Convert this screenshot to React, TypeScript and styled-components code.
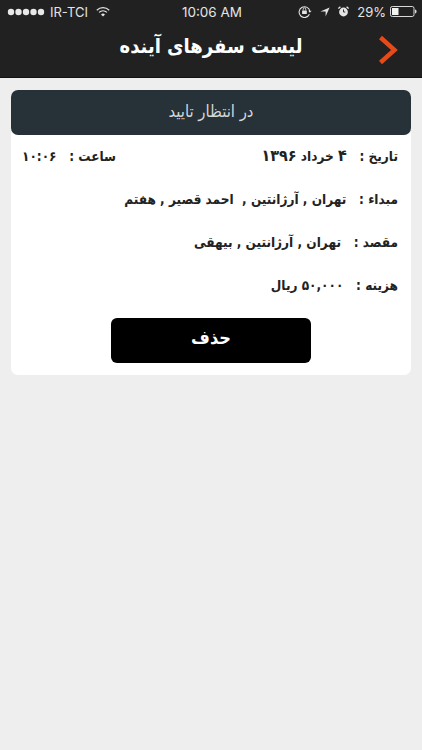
import React from "react";
import styled, { createGlobalStyle } from "styled-components";

const GlobalStyle = createGlobalStyle`
  html, body {
    margin: 0;
    padding: 0;
    background: #eeeeee;
  }
`;

const Page = styled.div`
  width: 422px;
  height: 750px;
  overflow: hidden;
  background: #eeeeee;
  font-family: "DejaVu Sans Condensed", "DejaVu Sans", sans-serif;
`;

const Header = styled.header`
  height: 78px;
  box-sizing: border-box;
  background: #212121;
  border-bottom: 1px solid #111;
  color: #fff;
`;

const StatusBar = styled.div`
  height: 23px;
  padding: 0 5px 0 7px;
  display: grid;
  grid-template-columns: 1fr auto 1fr;
  align-items: center;
  font-family: "Inter", "Liberation Sans", sans-serif;
  font-size: 13px;
  color: #e4e4e4;
`;

const StatusLeft = styled.div`
  display: flex;
  align-items: center;
  gap: 5px;
`;

const WifiSlot = styled.span`
  display: flex;
  margin-left: 3px;
`;

const StatusRight = styled.div`
  display: flex;
  align-items: center;
  justify-content: flex-end;
  gap: 8px;
`;

const BatteryLevel = styled.span`
  margin-right: -4px;
`;

const Clock = styled.div`
  font-size: 13.5px;
`;

const TitleRow = styled.div`
  height: 54px;
  display: grid;
  grid-template-columns: 44px 1fr 44px;
  align-items: center;
`;

const Title = styled.h1`
  grid-column: 2;
  margin: 0 0 9px;
  text-align: center;
  direction: rtl;
  font-size: 20px;
  font-weight: 700;
`;

const Content = styled.main`
  padding: 12px 11px 0;
`;

const Card = styled.section`
  background: #fff;
  border-radius: 7px;
  padding-bottom: 12px;
`;

const CardTitle = styled.div`
  height: 45px;
  background: #263238;
  border-radius: 7px;
  display: flex;
  align-items: center;
  justify-content: center;
  color: #d4d8da;
  direction: rtl;
  font-size: 16.5px;
  padding-bottom: 3px;
  box-sizing: border-box;
`;

const Rows = styled.div`
  direction: rtl;
  padding: 0 13px 0 11px;
`;

const Row = styled.div<{ $between?: boolean }>`
  height: 43px;
  display: flex;
  align-items: center;
  justify-content: ${({ $between }) => ($between ? "space-between" : "flex-start")};
  color: #222;
  font-size: 13.5px;
  font-weight: 700;
  white-space: pre;
  &:first-child {
    height: 42px;
  }
`;

const DateNumber = styled.span`
  font-size: 16px;
  line-height: 1;
`;

const ButtonRow = styled.div`
  display: flex;
  justify-content: center;
  margin-top: 12px;
`;

const DeleteButton = styled.button`
  width: 200px;
  height: 45px;
  border: 0;
  border-radius: 6px;
  background: #000;
  color: #fff;
  font-family: inherit;
  font-size: 18px;
  font-weight: 700;
  padding: 0 0 6px;
`;

const Signal = () => (
  <svg width="38" height="8" viewBox="0 0 38 8">
    {[4, 11.5, 19, 26.5, 34].map((cx) => (
      <circle key={cx} cx={cx} cy="4" r="3.2" fill="#e8e8e8" />
    ))}
  </svg>
);

const Wifi = () => (
  <svg width="14" height="10" viewBox="0 0 14 10" fill="none" stroke="#e4e4e4" strokeWidth="1.2">
    <path d="M.8 3.2a9 9 0 0 1 12.4 0" />
    <path d="M3 5.4a6 6 0 0 1 8 0" />
    <path d="M7 9.6 5 7.5a3 3 0 0 1 4 0Z" fill="#e4e4e4" stroke="none" />
  </svg>
);

const RotationLock = () => (
  <svg width="14" height="13" viewBox="0 0 13 12" fill="none">
    <path d="M10.6 8.6A5 5 0 1 1 11 6" stroke="#e4e4e4" strokeWidth="1" />
    <path d="M9.6 5.4h3L11 7.2Z" fill="#e4e4e4" />
    <rect x="3.8" y="5" width="4.4" height="3.4" rx=".5" fill="#e4e4e4" />
    <path d="M4.8 5V3.8a1.2 1.2 0 0 1 2.4 0V5" stroke="#e4e4e4" strokeWidth=".8" />
  </svg>
);

const Location = () => (
  <svg width="10" height="10" viewBox="0 0 10 10">
    <path d="M9.6.4 5.6 9.6V4.4H.4Z" fill="#e4e4e4" />
  </svg>
);

const Alarm = () => (
  <svg width="11" height="11" viewBox="0 0 11 11" fill="none">
    <circle cx="5.5" cy="6" r="4.4" fill="#e4e4e4" />
    <path d="M5.5 3.4V6h1.8" stroke="#212121" strokeWidth=".9" />
    <path d="M.4 2.6 2.4.7M10.6 2.6 8.6.7" stroke="#e4e4e4" strokeWidth="1.3" />
  </svg>
);

const Battery = () => (
  <svg width="27" height="11" viewBox="0 0 27 11" fill="none">
    <rect x=".5" y=".5" width="23.5" height="10" rx="1.8" stroke="#d8d8d8" />
    <rect x="2" y="2" width="6.5" height="7" fill="#f2f2f2" />
    <path d="M25 3.6c1 .2 1.6 1 1.6 1.9s-.6 1.7-1.6 1.9Z" fill="#d8d8d8" />
  </svg>
);

const Chevron = () => (
  <svg width="20" height="30" viewBox="0 0 20 30" fill="none">
    <path d="M2.5 2.5 16.5 15 2.5 27.5" stroke="#e64a19" strokeWidth="4.4" />
  </svg>
);

const App: React.FC = () => (
  <Page>
    <GlobalStyle />
    <Header>
      <StatusBar>
        <StatusLeft>
          <Signal />
          <span>IR-TCI</span>
          <WifiSlot>
            <Wifi />
          </WifiSlot>
        </StatusLeft>
        <Clock>10:06 AM</Clock>
        <StatusRight>
          <RotationLock />
          <Location />
          <Alarm />
          <BatteryLevel>29%</BatteryLevel>
          <Battery />
        </StatusRight>
      </StatusBar>
      <TitleRow>
        <Title>لیست سفرهای آینده</Title>
        <Chevron />
      </TitleRow>
    </Header>
    <Content>
      <Card>
        <CardTitle>در انتظار تایید</CardTitle>
        <Rows>
          <Row $between>
            <span>
              تاریخ :   <DateNumber>۴</DateNumber> خرداد <DateNumber>۱۳۹۶</DateNumber>
            </span>
            <span>ساعت :   ۱۰:۰۶</span>
          </Row>
          <Row>مبداء :   تهران , آرژانتین ,  احمد قصیر , هفتم</Row>
          <Row>مقصد :   تهران , آرژانتین , بیهقی</Row>
          <Row>هزینه :   ۵۰,۰۰۰ ریال</Row>
        </Rows>
        <ButtonRow>
          <DeleteButton>حذف</DeleteButton>
        </ButtonRow>
      </Card>
    </Content>
  </Page>
);

export default App;
